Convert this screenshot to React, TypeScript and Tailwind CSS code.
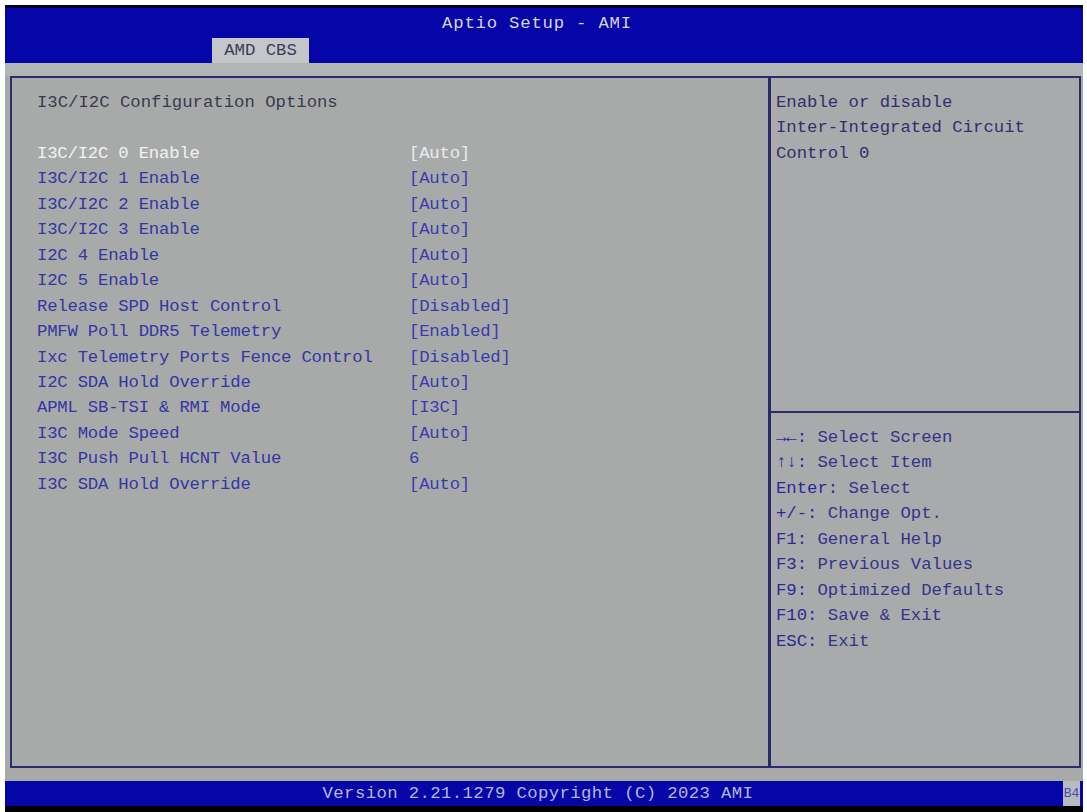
import React from 'react';

interface Item {
  label: string;
  value: string;
}

const items: Item[] = [
  { label: 'I3C/I2C 0 Enable', value: '[Auto]' },
  { label: 'I3C/I2C 1 Enable', value: '[Auto]' },
  { label: 'I3C/I2C 2 Enable', value: '[Auto]' },
  { label: 'I3C/I2C 3 Enable', value: '[Auto]' },
  { label: 'I2C 4 Enable', value: '[Auto]' },
  { label: 'I2C 5 Enable', value: '[Auto]' },
  { label: 'Release SPD Host Control', value: '[Disabled]' },
  { label: 'PMFW Poll DDR5 Telemetry', value: '[Enabled]' },
  { label: 'Ixc Telemetry Ports Fence Control', value: '[Disabled]' },
  { label: 'I2C SDA Hold Override', value: '[Auto]' },
  { label: 'APML SB-TSI & RMI Mode', value: '[I3C]' },
  { label: 'I3C Mode Speed', value: '[Auto]' },
  { label: 'I3C Push Pull HCNT Value', value: '6' },
  { label: 'I3C SDA Hold Override', value: '[Auto]' },
];

const keys: [string, string][] = [
  ['→←:', 'Select Screen'],
  ['↑↓:', 'Select Item'],
  ['Enter:', 'Select'],
  ['+/-:', 'Change Opt.'],
  ['F1:', 'General Help'],
  ['F3:', 'Previous Values'],
  ['F9:', 'Optimized Defaults'],
  ['F10:', 'Save & Exit'],
  ['ESC:', 'Exit'],
];

export default function App() {
  const selected = 0;

  return (
    <div className="w-[1087px] h-[812px] bg-white pl-[5px] pr-[4px] pt-[5px] font-['Liberation_Mono','DejaVu_Sans_Mono',monospace] text-[17.3px] leading-[25.45px]">
      <div className="flex h-full flex-col bg-[#a8aaaa]">
        {/* header */}
        <div className="flex h-[58px] flex-col border-t-[3px] border-[#000030] bg-[#0606a8]">
          <div className="flex h-[30px] items-center justify-center pr-[14px] pt-[2px] tracking-[0.8px] text-[#d4d4e4]">
            Aptio Setup - AMI
          </div>
          <div className="flex flex-1 items-end pl-[207px]">
            <div className="flex h-[25px] w-[97px] items-center justify-center bg-[#c4c6c9] text-[#3c3c5a]">
              AMD CBS
            </div>
          </div>
        </div>

        <div className="h-[13px] bg-[#b2b4b6]" />

        {/* main panel */}
        <div className="ml-[5px] mr-[2px] flex h-[692px] border-2 border-[#2c2c6c]">
          <div className="w-[759px] border-r-[3px] border-[#2a2a66] pl-[25px] pt-[12px]">
            <div className="text-[#3a3a4e]">I3C/I2C Configuration Options</div>
            <div className="h-[25.45px]" />
            {items.map((it, i) => (
              <div key={it.label} className="grid grid-cols-[372px_1fr] tracking-[-0.2px]">
                <span className={i === selected ? 'text-[#f2f2f4]' : 'text-[#3535a4]'}>{it.label}</span>
                <span className={i === selected ? 'text-[#eaeaf0]' : 'text-[#3a3aae]'}>{it.value}</span>
              </div>
            ))}
          </div>

          <div className="flex flex-1 flex-col bg-[#a9aaac]">
            <div className="h-[333px] pl-[5px] pt-[12px] text-[#30306c]">
              <div>Enable or disable</div>
              <div>Inter-Integrated Circuit</div>
              <div>Control 0</div>
            </div>
            <div className="h-[2px] bg-[#2c2c6c]" />
            <div className="pl-[5px] pt-[12px]">
              {keys.map(([k, d]) => (
                <div key={k} className="text-[#34348a]">
                  <span className="text-[#2a2a96]">{k}</span> {d}
                </div>
              ))}
            </div>
          </div>
        </div>

        <div className="h-[13px]" />

        {/* footer */}
        <div className="flex h-[25px] items-center bg-[#0606a8]">
          <div className="flex flex-1 items-center justify-center pl-[8px] tracking-[0.4px] text-[#b6b6dc]">
            Version 2.21.1279 Copyright (C) 2023 AMI
          </div>
          <div className="mr-[3px] flex h-[25px] w-[17px] items-center justify-center bg-[#b8bac2] text-[13px] text-[#4848a8]">
            B4
          </div>
        </div>
        <div className="flex-1 bg-black" />
      </div>
    </div>
  );
}
